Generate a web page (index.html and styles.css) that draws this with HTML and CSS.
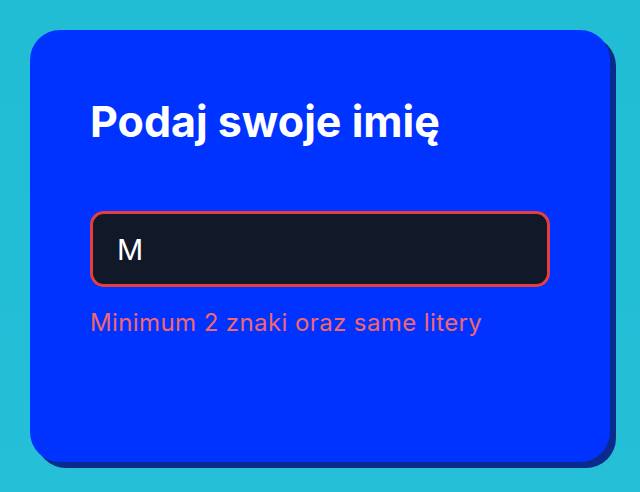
FILE: index.html
```html
<!DOCTYPE html>
<html lang="pl">
<head>
    <meta charset="UTF-8">
    <meta name="viewport" content="width=device-width, initial-scale=1.0">
    <title>Podaj swoje imię</title>
    <link rel="stylesheet" href="styles.css">
</head>
<body>
    <div class="karta">
        <h1 class="tytul">Podaj swoje imię</h1>
        <input class="pole bledne" type="text" value="M">
        <p class="blad">Minimum 2 znaki oraz same litery</p>
    </div>
</body>
</html>
```

FILE: styles.css
```css
* {
    box-sizing: border-box;
    font-family: Inter, "Noto Sans", sans-serif;
}

body {
    margin: 0;
    min-height: 100vh;
    display: flex;
    align-items: center;
    justify-content: center;
    background: linear-gradient(180deg, #20bdd4, #25bfd8);
}

.karta {
    width: 580px;
    height: 432px;
    padding: 60px;
    background-color: #0033ff;
    border-radius: 30px;
    box-shadow: 6px 6px 0 #0a2a8c;
}

.tytul {
    margin: 0 0 58px 0;
    font-size: 43px;
    font-weight: 700;
    line-height: 63px;
    color: #ffffff;
}

.pole {
    display: block;
    width: 100%;
    height: 76px;
    padding: 0 24px;
    background-color: #111827;
    border: 3px solid #374151;
    border-radius: 14px;
    color: #ffffff;
    font-size: 29px;
    outline: none;
}

.pole.bledne {
    border-color: #e53e3e;
}

.blad {
    margin: 18px 0 0 0;
    font-size: 24px;
    line-height: 1.5;
    letter-spacing: 0.4px;
    color: #f2666f;
}
```
